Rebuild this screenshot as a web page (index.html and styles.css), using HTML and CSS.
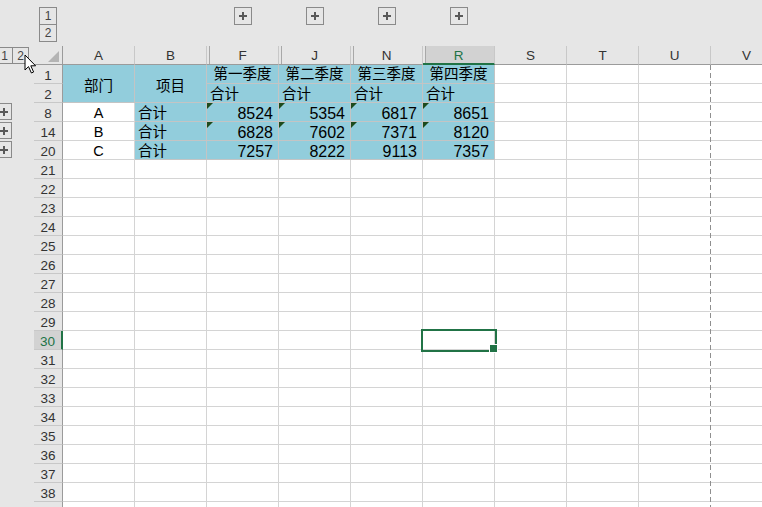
FILE: index.html
```html
<!DOCTYPE html>
<html lang="zh-CN">

<head>
    <meta charset="UTF-8">
    <meta name="viewport" content="width=device-width, initial-scale=1.0">
    <title>季度汇总</title>
    <link rel="stylesheet" href="styles.css">
</head>

<body>
    <div class="sheet">
        <div class="grid" id="grid"></div>
        <div class="page-break"></div>
        <svg class="cursor" width="13" height="20" viewBox="0 0 13 20">
            <path d="M1 1 V16 L4.5 12.6 L7.4 19 L9.6 18 L6.8 11.8 H11.6 Z" fill="#fff" stroke="#000" stroke-width="1" stroke-linejoin="round" />
        </svg>
    </div>

    <script>
        // Visible columns; F, J, N, R sit after collapsed groups
        const cols = ['A', 'B', 'F', 'J', 'N', 'R', 'S', 'T', 'U', 'V'];
        const grouped = ['F', 'J', 'N', 'R'];
        const quarters = { F: '第一季度', J: '第二季度', N: '第三季度', R: '第四季度' };

        const rows = [1, 2, 8, 14, 20];
        for (let r = 21; r <= 38; r++) rows.push(r);

        const data = {
            8: { A: 'A', F: 8524, J: 5354, N: 6817, R: 8651 },
            14: { A: 'B', F: 6828, J: 7602, N: 7371, R: 8120 },
            20: { A: 'C', F: 7257, J: 8222, N: 9113, R: 7357 }
        };

        const activeRow = 30;
        const activeCol = 'R';

        const cell = (cls, text = '') => `<div class="${cls}">${text}</div>`;

        let html = '';

        // Outline bar above the column headers
        html += cell('out');
        html += '<div class="out levels"><span class="btn">1</span><span class="btn">2</span></div>';
        cols.forEach(c => {
            html += grouped.includes(c) ? '<div class="out top-plus"><span class="btn plus"></span></div>' : cell('out');
        });

        // Column headers
        html += '<div class="out levels-left"><span class="btn">1</span><span class="btn">2</span></div>';
        html += cell('corner');
        cols.forEach(c => {
            let cls = 'ch';
            if (grouped.includes(c)) cls += ' hid';
            if (c === activeCol) cls += ' on';
            html += cell(cls, c);
        });

        // Rows
        rows.forEach(r => {
            html += r in data ? '<div class="out row-plus"><span class="btn plus"></span></div>' : cell('out');
            html += cell('rh' + (r === activeRow ? ' on' : ''), r);

            cols.forEach(c => {
                let cls = 'c';
                let text = '';
                if (c === 'U') cls += ' pb';

                if (r === 1) {
                    if (c === 'A') { cls += ' fill merge'; text = '部门'; }
                    else if (c === 'B') { cls += ' fill merge'; text = '项目'; }
                    else if (quarters[c]) { cls += ' fill ctr q'; text = quarters[c]; }
                } else if (r === 2) {
                    if (c === 'A' || c === 'B') return;
                    if (quarters[c]) { cls += ' fill'; text = '合计'; }
                } else if (data[r]) {
                    if (c === 'A') { cls += ' ctr'; text = data[r].A; }
                    else if (c === 'B') { cls += ' fill'; text = '合计'; }
                    else if (quarters[c]) {
                        cls += ' fill num';
                        if (r !== 20) cls += ' tri';
                        text = data[r][c];
                    }
                }

                if (r === activeRow && c === activeCol) cls += ' sel';
                html += cell(cls, text);
            });
        });

        // partly visible row below 38
        html += cell('out') + cell('rh');
        cols.forEach(c => html += cell(c === 'U' ? 'c pb' : 'c'));

        document.getElementById('grid').innerHTML = html;
    </script>

</body>

</html>
```

FILE: styles.css
```css
* {
    box-sizing: border-box;
}

body {
    margin: 0;
    overflow: hidden;
    background-color: white;
    font-family: "Liberation Sans", "Noto Sans CJK SC", sans-serif;
    color: #000;
}

.sheet {
    position: relative;
    width: 762px;
    height: 507px;
    overflow: hidden;
}

.grid {
    display: grid;
    grid-template-columns: 34px 29px repeat(10, 72px);
    grid-template-rows: 46px repeat(25, 19px);
}

/* outline area */
.out {
    background-color: #e6e6e6;
}

.btn {
    display: flex;
    align-items: center;
    justify-content: center;
    width: 18px;
    height: 18px;
    border: 1px solid #8a8a8a;
    background-color: #e6e6e6;
    color: #444;
    font-size: 12px;
    line-height: 1;
}

.plus {
    background:
        linear-gradient(#595959, #595959) center / 8px 2px no-repeat,
        linear-gradient(#595959, #595959) center / 2px 8px no-repeat,
        #e6e6e6;
}

.levels {
    display: flex;
    flex-direction: column;
    padding: 7px 0 0 5px;
}

.levels .btn + .btn {
    margin-top: -1px;
}

.levels-left {
    display: flex;
    padding-top: 1px;
    margin-left: -4px;
}

.levels-left .btn {
    width: 17px;
    height: 17px;
}

.levels-left .btn + .btn {
    margin-left: -1px;
}

.top-plus {
    display: flex;
    justify-content: center;
    padding-top: 7px;
}

.row-plus .btn {
    width: 17px;
    height: 17px;
    margin-left: -5px;
}

/* headers */
.corner {
    position: relative;
    background-color: #e6e6e6;
    border-right: 1px solid #9b9b9b;
    border-bottom: 1px solid #9b9b9b;
}

.corner::after {
    content: '';
    position: absolute;
    right: 3px;
    bottom: 2px;
    border-style: solid;
    border-width: 0 0 11px 11px;
    border-color: transparent transparent #b4b4b4 transparent;
}

.ch {
    background-color: #e6e6e6;
    border-right: 1px solid #c8c8c8;
    border-bottom: 1px solid #9b9b9b;
    text-align: center;
    font-size: 13.5px;
    line-height: 18px;
    padding-top: 1px;
    color: #333;
}

.ch.hid {
    box-shadow: inset 2px 0 0 #e6e6e6, inset 3px 0 0 #a8a8a8;
}

.ch.on {
    background-color: #d2d2d2;
    border-bottom: 2px solid #217346;
    color: #217346;
}

.rh {
    background-color: #e6e6e6;
    border-right: 1px solid #9b9b9b;
    border-bottom: 1px solid #c8c8c8;
    text-align: center;
    font-size: 13.5px;
    line-height: 18px;
    padding-top: 2px;
    color: #333;
}

.rh.on {
    background-color: #d2d2d2;
    border-right: 2px solid #217346;
    color: #217346;
}

/* cells */
.c {
    position: relative;
    border-right: 1px solid #d4d4d4;
    border-bottom: 1px solid #d4d4d4;
    padding: 1px 3px 0;
    font-size: 14.5px;
    line-height: 18px;
    white-space: nowrap;
}

.fill {
    background-color: #92cddc;
    border-color: #c4c4c4;
}

.ctr {
    text-align: center;
}

.q {
    padding-top: 0;
}

.num {
    text-align: right;
    font-size: 16px;
    padding: 2px 5px 0 3px;
}

.merge {
    grid-row: span 2;
    display: flex;
    align-items: center;
    justify-content: center;
    padding-top: 4px;
}

.tri::before {
    content: '';
    position: absolute;
    left: 0;
    top: 0;
    border-style: solid;
    border-width: 6px 6px 0 0;
    border-color: #1d4b1d transparent transparent transparent;
}

.pb {
    border-right-color: transparent;
}

/* active cell */
.sel::after {
    content: '';
    position: absolute;
    left: -2px;
    top: -2px;
    right: -3px;
    bottom: -3px;
    border: 2px solid #217346;
    z-index: 2;
}

.sel::before {
    content: '';
    position: absolute;
    right: -4px;
    bottom: -4px;
    width: 7px;
    height: 7px;
    background-color: #217346;
    border: 1px solid white;
    z-index: 3;
}

.page-break {
    position: absolute;
    left: 710px;
    top: 65px;
    bottom: 0;
    width: 1px;
    background: repeating-linear-gradient(#8f8f8f 0 5px, transparent 5px 8px);
}

.cursor {
    position: absolute;
    left: 24px;
    top: 54px;
}
```
